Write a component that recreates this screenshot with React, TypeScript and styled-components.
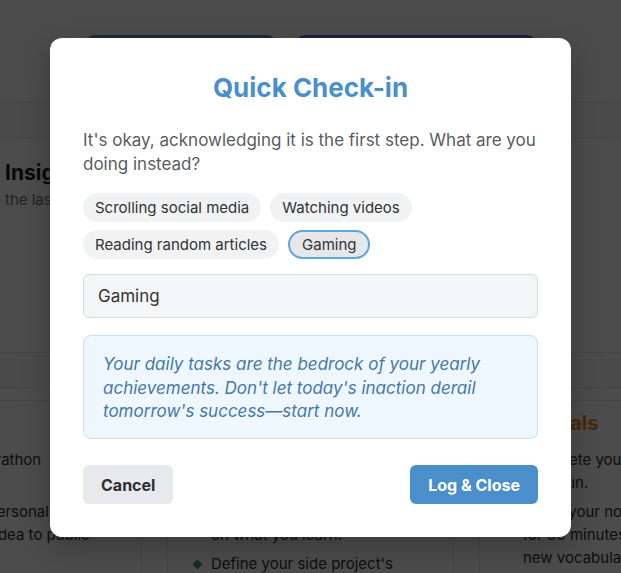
import styled, { createGlobalStyle } from "styled-components";

const GlobalStyle = createGlobalStyle`
    html, body {
        margin: 0;
        padding: 0;
        background: #ffffff;
        font-family: Inter, "Noto Sans", sans-serif;
        overflow: hidden;
    }
`

const Page = styled.div`
    position: relative;
    width: 621px;
    height: 573px;
    overflow: hidden;
    background: #ffffff;
    color: #222;
`

const Hero = styled.div`
    margin-top: -23px;
    display: flex;
    flex-direction: column;
    align-items: center;
`

const HeroText = styled.p`
    margin: 0;
    font-size: 16px;
    line-height: 22px;
    color: #666;
`

const HeroButtons = styled.div`
    display: flex;
    gap: 18px;
    margin-top: 36px;
`

const HeroButton = styled.div<{ $bg: string; $w: number }>`
    width: ${props => props.$w}px;
    height: 48px;
    border-radius: 10px;
    background: ${props => props.$bg};
`

const Band = styled.div<{ $top: number }>`
    margin-top: ${props => props.$top}px;
    height: 34px;
    border-top: 1px solid #e6e6e6;
    border-bottom: 1px solid #e6e6e6;
    background: #fafafa;
`

const Insights = styled.div`
    padding: 21px 5px 0;
    height: 193px;
`

const InsightsTitle = styled.h2`
    margin: 0;
    font-size: 21px;
    line-height: 28px;
    font-weight: 700;
    color: #1d1d1d;
`

const InsightsSub = styled.p`
    margin: 3px 0 0;
    font-size: 15px;
    color: #777;
`

const CardRow = styled.div`
    display: flex;
    justify-content: center;
    margin-top: 12px;
`

const CardGrid = styled.div`
    flex: none;
    display: grid;
    grid-template-columns: repeat(3, 287px);
    gap: 25px;
`

const Card = styled.div`
    border: 1px solid #e3e3e3;
    border-radius: 10px;
    padding: 9px 22px 20px;
    height: 220px;
`

const CardTitle = styled.h3<{ $color: string }>`
    margin: 0 0 12px;
    font-size: 20px;
    line-height: 26px;
    font-weight: 700;
    color: ${props => props.$color};
`

const Item = styled.div`
    display: flex;
    gap: 8px;
    font-size: 15px;
    line-height: 23px;
    color: #333;
    margin-bottom: 6px;
`

const Diamond = styled.span`
    flex: none;
    width: 7px;
    height: 7px;
    margin: 9px 2px 0 4px;
    background: #3aa27a;
    transform: rotate(45deg);
`

const Line = styled.span`
    display: block;
    white-space: nowrap;
`

const Overlay = styled.div`
    position: absolute;
    inset: 0;
    background: rgba(0, 0, 0, 0.7);
    display: flex;
    justify-content: center;
    padding-top: 38px;
    box-sizing: border-box;
`

const Modal = styled.div`
    width: 521px;
    height: 499px;
    box-sizing: border-box;
    background: #fff;
    border-radius: 12px;
    padding: 34px 33px;
    box-shadow: 0 10px 30px rgba(0, 0, 0, 0.25);
    font-family: Inter, "Noto Sans", sans-serif;
`

const Title = styled.h1`
    margin: 0;
    text-align: center;
    font-size: 26px;
    line-height: 32px;
    font-weight: 700;
    color: #4a8fca;
`

const Prompt = styled.p`
    margin: 24px 0 0;
    font-size: 17px;
    line-height: 24px;
    color: #575c63;
`

const Chips = styled.div`
    display: flex;
    flex-wrap: wrap;
    gap: 8px 9px;
    margin-top: 17px;
`

const Chip = styled.button<{ $active?: boolean }>`
    height: 29px;
    box-sizing: border-box;
    border-radius: 15px;
    font-family: inherit;
    font-size: 15px;
    color: #333;
    background: ${props => props.$active ? "#e5e7eb" : "#f1f2f4"};
    border: ${props => props.$active ? "2px solid #62a5dc" : "2px solid transparent"};
    padding: ${props => props.$active ? "0 12px" : "0 10px"};
`

const Input = styled.input`
    display: block;
    width: 100%;
    box-sizing: border-box;
    margin-top: 15px;
    height: 44px;
    padding: 0 14px;
    border: 1px solid #d9dbdf;
    border-radius: 6px;
    background: #f4f5f7;
    font-family: inherit;
    font-size: 17px;
    color: #333;
    outline: none;
`

const Quote = styled.div`
    margin-top: 17px;
    height: 104px;
    box-sizing: border-box;
    padding: 17px 19px;
    border: 1px solid #c7dff3;
    border-radius: 8px;
    background: #eff7fe;
    font-style: italic;
    font-size: 17px;
    line-height: 23.5px;
    color: #4677a6;
`

const Actions = styled.div`
    display: flex;
    justify-content: space-between;
    margin-top: 26px;
`

const Button = styled.button<{ $primary?: boolean }>`
    height: 39px;
    padding: 0 18px;
    border: 0;
    border-radius: 6px;
    font-family: inherit;
    font-size: 16px;
    font-weight: 700;
    color: ${props => props.$primary ? "#fff" : "#2d2f33"};
    background: ${props => props.$primary ? "#4a8fca" : "#e8e9ec"};
`

const cards = [
    {
        title: "Habits",
        color: "#222",
        items: [["Run a half marathon", "in May."], ["Go launch a personal", "project, from idea to public"]],
    },
    {
        title: "Projects",
        color: "#222",
        items: [["Ship a new feature", "every single week."], ["Write two blog posts", "on what you learn."], ["Define your side project's", "core goals."]],
    },
    {
        title: "Our Goals",
        color: "#e38a1e",
        items: [["Complete your planned", "daily run."], ["Study your notes", "for 30 minutes and learn", "new vocabulary words."]],
    },
]

const chips = ["Scrolling social media", "Watching videos", "Reading random articles", "Gaming"]

const App = () => {
    return (
        <>
            <GlobalStyle />
            <Page>
                <Hero>
                    <HeroText>Stay on top of your day, every day, and keep going.</HeroText>
                    <HeroButtons>
                        <HeroButton $bg="#5a8dc2" $w={192} />
                        <HeroButton $bg="#6a5ef2" $w={242} />
                    </HeroButtons>
                </Hero>
                <Band $top={19} />
                <Insights>
                    <InsightsTitle>Insights</InsightsTitle>
                    <InsightsSub>the last 7 days</InsightsSub>
                </Insights>
                <Band $top={0} />
                <CardRow>
                    <CardGrid>
                        {cards.map(card => (
                            <Card key={card.title}>
                                <CardTitle $color={card.color}>{card.title}</CardTitle>
                                {card.items.map((lines, i) => (
                                    <Item key={i}>
                                        <Diamond />
                                        <div>
                                            {lines.map(l => <Line key={l}>{l}</Line>)}
                                        </div>
                                    </Item>
                                ))}
                            </Card>
                        ))}
                    </CardGrid>
                </CardRow>
                <Overlay>
                    <Modal>
                        <Title>Quick Check-in</Title>
                        <Prompt>It's okay, acknowledging it is the first step. What are you doing instead?</Prompt>
                        <Chips>
                            {chips.map(c => (
                                <Chip key={c} $active={c === "Gaming"}>{c}</Chip>
                            ))}
                        </Chips>
                        <Input defaultValue="Gaming" />
                        <Quote>
                            Your daily tasks are the bedrock of your yearly achievements. Don't let today's inaction derail tomorrow's success—start now.
                        </Quote>
                        <Actions>
                            <Button>Cancel</Button>
                            <Button $primary>Log &amp; Close</Button>
                        </Actions>
                    </Modal>
                </Overlay>
            </Page>
        </>
    )
}

export default App;
